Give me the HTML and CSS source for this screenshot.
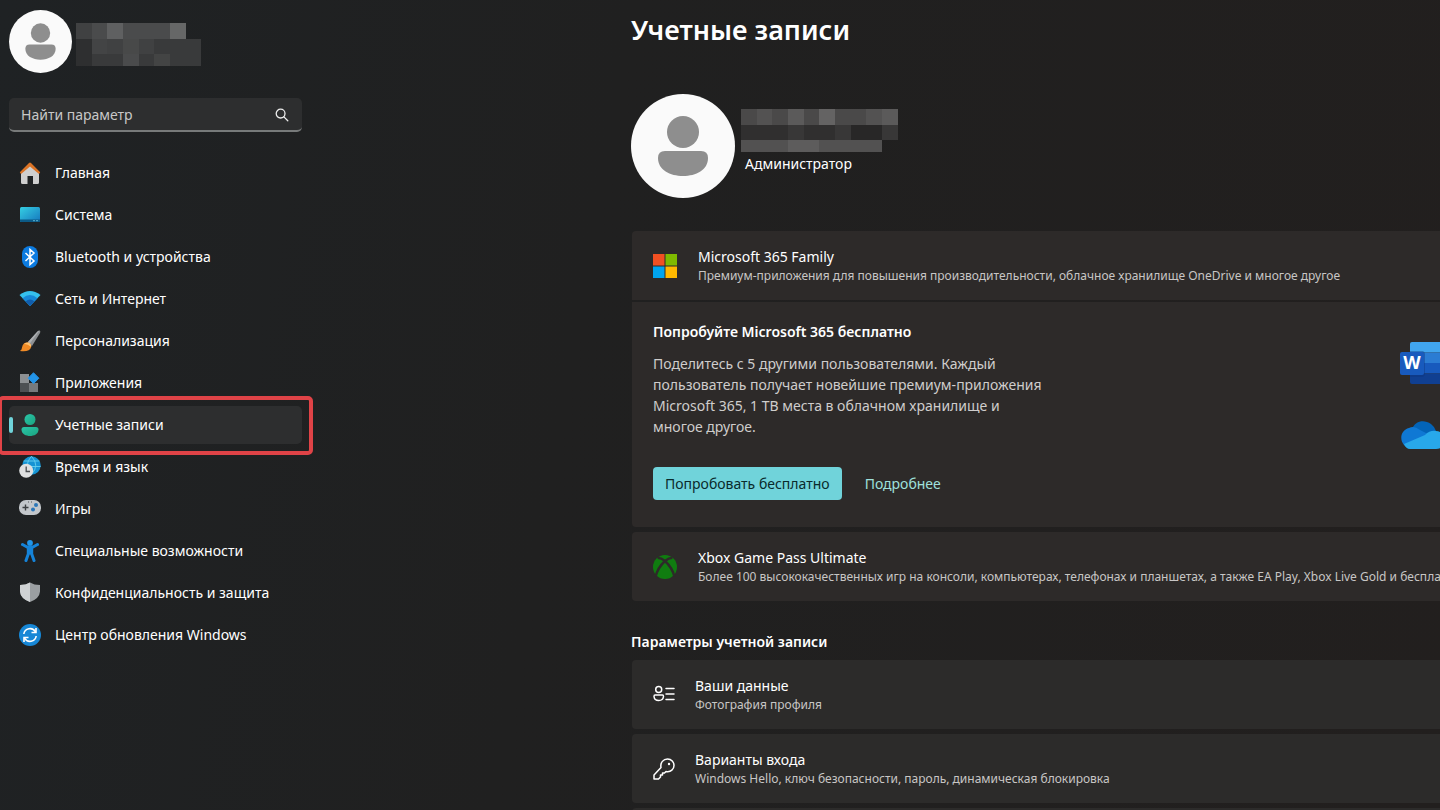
FILE: index.html
```html
<!DOCTYPE html>
<html lang="ru">
<head>
  <meta charset="UTF-8" />
  <meta name="viewport" content="width=device-width, initial-scale=1.0"/>
  <title>Учетные записи</title>
  <link rel="stylesheet" href="styles.css">
</head>
<body>
  <div class="window">
    <aside class="sidebar">
      <div class="user">
        <svg class="avatar" viewBox="0 0 104 104">
          <circle cx="52" cy="52" r="52" fill="#fafafa"/>
          <circle cx="52" cy="38" r="16" fill="#8e8e8e"/>
          <path d="M34 57H70Q77 57 77 64C77 76 65 82 52 82S27 76 27 64Q27 57 34 57Z" fill="#8e8e8e"/>
        </svg>
        <!-- hidden user name -->
        <svg class="user-mask" viewBox="0 0 125 43" shape-rendering="crispEdges">
          <path d="M0 0H110V16H0Z" fill="#4a4b4c"/>
          <path d="M0 0H16V16H0Z" fill="#404142"/>
          <path d="M31 0H47V16H31Z" fill="#5f6061"/>
          <path d="M94 0H110V16H94Z" fill="#666767"/>
          <path d="M0 16H125V43H0Z" fill="#393a3b"/>
          <path d="M0 16H16V43H0Z" fill="#2e2f30"/>
          <path d="M16 16H47V31H16Z" fill="#434445"/>
          <path d="M47 16H63V43H47Z" fill="#4a4b4c"/>
          <path d="M63 16H78V31H63Z" fill="#404142"/>
          <path d="M47 16H63V31H47Z" fill="#484949"/>
          <path d="M31 16H47V31H31Z" fill="#404142"/>
          <path d="M78 31H94V43H78Z" fill="#434444"/>
        </svg>
      </div>

      <form class="search">
        <input type="text" id="search" placeholder="Найти параметр" aria-label="Найти параметр" />
        <button type="submit" aria-label="Найти">
          <svg width="14" height="14" viewBox="0 0 14 14" fill="none" stroke="#eee" stroke-width="1.3" stroke-linecap="round">
            <circle cx="5.6" cy="5.6" r="4.4"/>
            <path d="M8.9 8.9L12.8 12.8"/>
          </svg>
        </button>
      </form>

      <nav class="menu">
        <a href="#">
          <svg viewBox="0 0 22 22">
            <path d="M2 10L11 2.5L20 10V20.5Q20 22 18.500 22H14V14H8.500V22H3.500Q2 22 2 20.500Z" fill="#cfcfcf"/>
            <path d="M.8 10.200L10 1Q11 .2 12 1L21.200 10.200L20 12L11 4.600L2 12Z" fill="#dc7426"/>
          </svg>
          Главная
        </a>
        <a href="#">
          <svg viewBox="0 0 22 22">
            <defs>
              <linearGradient id="screen" x1="0" y1="0" x2="1" y2="1"><stop offset="0" stop-color="#35cfe3"/><stop offset="1" stop-color="#1576bd"/></linearGradient>
            </defs>
            <rect x="1" y="3" width="20" height="15" rx="1.500" fill="url(#screen)"/>
            <path d="M1 15.500H21V16.500Q21 18 19.500 18H2.500Q1 18 1 16.500Z" fill="#0b5a86"/>
            <path d="M14 16.700H16M17 16.700H19" stroke="#7fd6ee" stroke-width=".7"/>
          </svg>
          Система
        </a>
        <a href="#">
          <svg viewBox="0 0 22 22">
            <rect x="3" y="0" width="16" height="22" rx="8" fill="#0c7be0"/>
            <path d="M6.500 7L15 15L11 18.500V3.500L15 7L6.500 15" fill="none" stroke="#fff" stroke-width="1.500"/>
          </svg>
          Bluetooth и устройства
        </a>
        <a href="#">
          <svg viewBox="0 0 22 22">
            <path d="M.5 7Q11 -1 21.500 7L11 18Z" fill="#35c0ed"/>
            <path d="M3.500 10.200Q11 4 18.500 10.200L11 18Z" fill="#1789d8"/>
            <path d="M6.500 13.400Q11 9.500 15.500 13.400L11 18Z" fill="#105dac"/>
          </svg>
          Сеть и Интернет
        </a>
        <a href="#">
          <svg viewBox="0 0 22 22">
            <path d="M20.500 .5Q22 1 21 3L13 16L8.500 12.500L18.500 1.500Q19.500 .3 20.500 .5Z" fill="#8c8f92"/>
            <path d="M18.500 1.500L8.500 12.500L10.500 14L20.500 .5Z" fill="#adb0b3"/>
            <path d="M8 12.500Q12.500 12.800 12.200 17Q10.500 22.500 1 21Q3 19.500 3 17.500Q4 12.500 8 12.500Z" fill="#ef8a26"/>
            <path d="M8 12.500Q12.500 12.800 12.200 17Q9 14 5 13.800Z" fill="#ffc06b"/>
          </svg>
          Персонализация
        </a>
        <a href="#">
          <svg viewBox="0 0 22 22">
            <rect x="1" y="2" width="9" height="9" fill="#8d9093"/>
            <rect x="1" y="11" width="9" height="9" fill="#4d5053"/>
            <rect x="10" y="11" width="9" height="9" fill="#777a7d"/>
            <path d="M14.500 .8L19.900 6.200L14.500 11.600L9.100 6.200Z" fill="#2394e8" stroke="#2394e8" stroke-linejoin="round"/>
          </svg>
          Приложения
        </a>
        <a href="#" class="active" aria-current="page">
          <svg viewBox="0 0 22 22">
            <defs>
              <linearGradient id="person" x1="0" y1="0" x2="1" y2="1"><stop offset="0" stop-color="#2bc5a8"/><stop offset="1" stop-color="#1aa37f"/></linearGradient>
            </defs>
            <circle cx="11" cy="5.500" r="5.500" fill="url(#person)"/>
            <path d="M5 13H17Q19.500 13 19.500 15.500C19.500 20 15 22 11 22S2.500 20 2.500 15.500Q2.500 13 5 13Z" fill="url(#person)"/>
          </svg>
          Учетные записи
        </a>
        <a href="#">
          <svg viewBox="0 0 22 22">
            <circle cx="12.500" cy="9.500" r="9.200" fill="#1593d4"/>
            <path d="M12.500 .3Q4 9 12.500 18.700M12.500 .3Q21 9 12.500 18.700M4.500 5H20.500M3.500 10.500H21.700" fill="none" stroke="#66d0ef" stroke-width=".9"/>
            <circle cx="7.200" cy="14.800" r="7" fill="#dedfe0"/>
            <path d="M7.200 10.500V15.500H11" fill="none" stroke="#4a4d50" stroke-width="1.300"/>
          </svg>
          Время и язык
        </a>
        <a href="#">
          <svg viewBox="0 0 22 22">
            <rect x="0" y="2" width="22" height="15" rx="7" fill="#c3c7cb"/>
            <path d="M6.500 6.500V12.500M3.500 9.500H9.500" stroke="#3d4043" stroke-width="1.400"/>
            <circle cx="17" cy="7" r="2" fill="#2c76b8"/>
            <circle cx="14" cy="11.500" r="2" fill="#2c76b8"/>
            <path d="M9 4H10M12 4H13" stroke="#55585b"/>
          </svg>
          Игры
        </a>
        <a href="#">
          <svg viewBox="0 0 22 22">
            <circle cx="11" cy="3" r="2.900" fill="#2196ea"/>
            <path d="M3.500 4.500L8 7H14L18.500 4.500M11 7V13M9.300 8V14L7 20.500M12.700 8V14L15 20.500" fill="none" stroke="#1583d8" stroke-width="3" stroke-linecap="round" stroke-linejoin="round"/>
          </svg>
          Специальные возможности
        </a>
        <a href="#">
          <svg viewBox="0 0 22 22">
            <path d="M11 .5Q15 3 21 3V9.500Q20.500 16.500 11 20Q1.500 16.500 1 9.500V3Q7 3 11 .5Z" fill="#9b9fa2"/>
            <path d="M11 .5V20Q1.500 16.500 1 9.500V3Q7 3 11 .5Z" fill="#cfd2d4"/>
          </svg>
          Конфиденциальность и защита
        </a>
        <a href="#">
          <svg viewBox="0 0 22 22">
            <circle cx="11" cy="11" r="11" fill="#1787d6"/>
            <path d="M4.800 10A6.300 6.300 0 0 1 16.500 7.800M17.200 12A6.300 6.300 0 0 1 5.500 14.200" fill="none" stroke="#fff" stroke-width="1.600"/>
            <path d="M17 4V8.500H12.500M5 18V13.500H9.500" fill="none" stroke="#fff" stroke-width="1.600"/>
          </svg>
          Центр обновления Windows
        </a>
      </nav>
    </aside>

    <main class="content">
      <h1>Учетные записи</h1>

      <div class="profile">
        <svg class="avatar-large" viewBox="0 0 104 104">
          <circle cx="52" cy="52" r="52" fill="#fafafa"/>
          <circle cx="52" cy="38" r="16" fill="#8e8e8e"/>
          <path d="M34 57H70Q77 57 77 64C77 76 65 82 52 82S27 76 27 64Q27 57 34 57Z" fill="#8e8e8e"/>
        </svg>
        <div class="profile-info">
          <svg class="profile-mask" viewBox="0 0 157 43" shape-rendering="crispEdges">
            <path d="M0 0H157V16H0Z" fill="#4a4949"/>
            <path d="M16 0H31V16H16ZM125 0H141V16H125Z" fill="#535252"/>
            <path d="M47 0H63V16H47ZM141 0H157V16H141Z" fill="#5b5a5a"/>
            <path d="M78 0H94V16H78Z" fill="#646363"/>
            <path d="M0 16H157V31H0Z" fill="#302f2f"/>
            <path d="M47 16H63V31H47ZM94 16H110V31H94ZM141 16H157V31H141Z" fill="#383737"/>
            <path d="M110 16H141V31H110Z" fill="#282727"/>
            <path d="M0 31H141V43H0Z" fill="#525151"/>
            <path d="M47 31H78V43H47Z" fill="#5d5c5c"/>
          </svg>
          <span class="role">Администратор</span>
        </div>
      </div>

      <section class="group">
        <a href="#" class="card card-top">
          <svg class="logo" viewBox="0 0 24 24">
            <path d="M0 0H11.500V11.500H0Z" fill="#f25022"/>
            <path d="M12.500 0H24V11.500H12.500Z" fill="#7fba00"/>
            <path d="M0 12.500H11.500V24H0Z" fill="#00a4ef"/>
            <path d="M12.500 12.500H24V24H12.500Z" fill="#ffb900"/>
          </svg>
          <span class="card-text">
            <span class="card-title">Microsoft 365 Family</span>
            <span class="card-sub">Премиум-приложения для повышения производительности, облачное хранилище OneDrive и многое другое</span>
          </span>
        </a>
        <div class="promo">
          <div class="promo-text">
            <h2>Попробуйте Microsoft 365 бесплатно</h2>
            <p>Поделитесь с 5 другими пользователями. Каждый пользователь получает новейшие премиум-приложения Microsoft 365, 1 TB места в облачном хранилище и многое другое.</p>
            <div class="actions">
              <button type="button" class="try-button">Попробовать бесплатно</button>
              <a href="#" class="more-link">Подробнее</a>
            </div>
          </div>
          <div class="apps">
            <svg width="46" height="42" viewBox="0 0 46 42">
              <path d="M12 0H44Q46 0 46 2V10.500H10V2Q10 0 12 0Z" fill="#41a5ee"/>
              <path d="M10 10.500H46V21H10Z" fill="#2b7cd3"/>
              <path d="M10 21H46V31.500H10Z" fill="#185abd"/>
              <path d="M10 31.500H46V40Q46 42 44 42H12Q10 42 10 40Z" fill="#103f91"/>
              <path d="M10 9H23Q25 10 25 12V33L23 35H10Z" fill="#0d357c" fill-opacity=".4"/>
              <rect x="0" y="10" width="24" height="23" rx="2" fill="#185abd"/>
              <text x="12" y="27" class="word-letter">W</text>
            </svg>
            <svg width="46" height="28" viewBox="0 0 46 28">
              <path d="M12 8C15 0 24 -2 31 3Q34 5 36 10L23 19Z" fill="#0364b8"/>
              <path d="M4 24C-1 18 1 9 9 7Q14 4 20 9L34 16L6 26Z" fill="#0f78d4"/>
              <path d="M25 14Q30 9 36 10C48 11 49 28 36 28H10Q6 28 4 23Z" fill="#28a8ea"/>
            </svg>
          </div>
        </div>
      </section>

      <a href="#" class="card">
        <svg class="logo" viewBox="0 0 26 26">
          <circle cx="13" cy="13" r="13" fill="#107c10"/>
          <path d="M5 3Q9 3 13 6.500Q17 3 21 3M3 23Q5 14 13 6.500Q21 14 23 23" fill="none" stroke="#2d2a29" stroke-width="2.600"/>
        </svg>
        <span class="card-text">
          <span class="card-title">Xbox Game Pass Ultimate</span>
          <span class="card-sub">Более 100 высококачественных игр на консоли, компьютерах, телефонах и планшетах, а также EA Play, Xbox Live Gold и бесплатно</span>
        </span>
      </a>

      <h2 class="section-title">Параметры учетной записи</h2>

      <div class="settings">
        <a href="#" class="card">
          <svg class="glyph" viewBox="0 0 22 22">
            <circle cx="5.700" cy="5.500" r="3"/>
            <path d="M2 11H9.500Q10.500 11 10.500 12.500Q10 16.500 5.700 16.500T1 12.500Q1 11 2 11ZM13 4.500H21M13 10H21M13 15.500H21"/>
          </svg>
          <span class="card-text">
            <span class="card-title">Ваши данные</span>
            <span class="card-sub">Фотография профиля</span>
          </span>
        </a>
        <a href="#" class="card">
          <svg class="glyph" viewBox="0 0 22 22">
            <path d="M8 9.500C7 4.500 10.500 1 14.500 1S21 4 21 7.500S18 14.500 13 13.500L11.500 15H9.500V17H7.500V19L5.500 21H1V17Z"/>
            <circle cx="16" cy="6" r="1.200" fill="#fff" stroke="none"/>
          </svg>
          <span class="card-text">
            <span class="card-title">Варианты входа</span>
            <span class="card-sub">Windows Hello, ключ безопасности, пароль, динамическая блокировка</span>
          </span>
        </a>
        <div class="card"></div>
      </div>
    </main>
  </div>
</body>
</html>
```
FILE: styles.css
```css
* {
  box-sizing: border-box;
}

body {
  margin: 0;
  font-family: "Noto Sans", sans-serif;
  font-size: 14px;
  line-height: 20px;
  color: #fff;
  background: #202020;
}

a {
  color: inherit;
  text-decoration: none;
}

.window {
  display: grid;
  grid-template-columns: 302px 1fr;
  column-gap: 329px;
  height: 100vh;
  overflow: hidden;
  background: linear-gradient(100deg, #1f2224 0%, #202020 40%, #221f1e 100%);
}

.sidebar {
  padding: 10px 0 0 9px;
}

.user {
  display: flex;
  align-items: center;
  gap: 4px;
}

.avatar {
  width: 63px;
  height: 63px;
}

.user-mask {
  width: 125px;
  height: 43px;
  margin-top: 6px;
}

.search {
  display: flex;
  margin-top: 25px;
  height: 34px;
  border-radius: 5px;
  border-bottom: 2px solid #777a7a;
  background: #2d2e2f;
}

.search input {
  flex: 1;
  min-width: 0;
  padding: 2px 12px 0;
  border: none;
  background: none;
  color: #fff;
  font: inherit;
}

.search input::placeholder {
  color: #c8c8c8;
  opacity: 1;
}

.search button {
  display: flex;
  align-items: center;
  padding: 2px 13px 0;
  border: none;
  background: none;
}

.menu {
  display: flex;
  flex-direction: column;
  gap: 4px;
  margin-top: 22px;
}

.menu a {
  display: flex;
  align-items: center;
  gap: 14px;
  height: 38px;
  padding-left: 10px;
  border-radius: 5px;
  white-space: nowrap;
}

.menu svg {
  width: 22px;
  height: 22px;
}

.menu .active {
  position: relative;
  background: #2d2e2f;
}

.active::before {
  content: "";
  position: absolute;
  left: 0;
  top: 11px;
  width: 4px;
  height: 16px;
  border-radius: 2px;
  background: #70d3da;
}

/* red highlight around the current item */
.active::after {
  content: "";
  position: absolute;
  inset: -10px -11px -11px;
  border: 4px solid #e04347;
  border-radius: 5px;
}

.content {
  min-width: 0;
  margin-right: -30px;
  padding-top: 10px;
}

h1 {
  margin: 0;
  font-size: 27px;
  line-height: 40px;
  font-weight: 600;
}

h2 {
  margin: 0;
  font-size: 14px;
  line-height: 20px;
  font-weight: 600;
}

.profile {
  display: flex;
  gap: 6px;
  margin: 44px 0 33px;
}

.avatar-large {
  width: 104px;
  height: 104px;
}

.profile-info {
  display: flex;
  flex-direction: column;
  padding-top: 15px;
}

.profile-mask {
  width: 157px;
  height: 43px;
}

.role {
  padding: 2px 4px;
}

.group {
  margin-bottom: 5px;
}

.card {
  display: flex;
  align-items: center;
  height: 69px;
  margin-left: 1px;
  padding: 0 21px;
  border-radius: 4px;
  background: #2d2a29;
  white-space: nowrap;
}

.card-top {
  border-radius: 4px 4px 0 0;
}

.logo {
  flex: none;
  width: 24px;
  height: 24px;
  margin-right: 21px;
}

.glyph {
  flex: none;
  width: 22px;
  height: 22px;
  margin-right: 20px;
  fill: none;
  stroke: #fff;
  stroke-width: 1.5;
  stroke-linecap: round;
  stroke-linejoin: round;
}

.card-text {
  display: flex;
  flex-direction: column;
}

.card-sub {
  font-size: 12px;
  line-height: 18px;
  color: #c8c6c5;
}

.promo {
  display: flex;
  justify-content: space-between;
  height: 225px;
  margin: 2px 0 0 1px;
  padding: 20px 24px 0 21px;
  border-radius: 0 0 4px 4px;
  background: #2d2a29;
}

.promo-text {
  width: 392px;
}

.promo p {
  margin: 11px 0 30px;
  line-height: 21px;
  color: #cfcdcc;
}

.actions {
  display: flex;
  align-items: center;
  gap: 23px;
}

.try-button {
  height: 33px;
  padding: 0 12px;
  border: none;
  border-radius: 4px;
  background: #70d3da;
  color: #0a2a2c;
  font: inherit;
}

.more-link {
  color: #9fe0dc;
}

.apps {
  display: flex;
  flex-direction: column;
  gap: 37px;
  padding-top: 20px;
}

.word-letter {
  font-size: 18px;
  font-weight: 700;
  fill: #fff;
  text-anchor: middle;
}

.section-title {
  margin: 31px 0 8px;
}

.settings {
  display: flex;
  flex-direction: column;
  gap: 5px;
}

.settings .card {
  background: #2c2b2a;
}
```
